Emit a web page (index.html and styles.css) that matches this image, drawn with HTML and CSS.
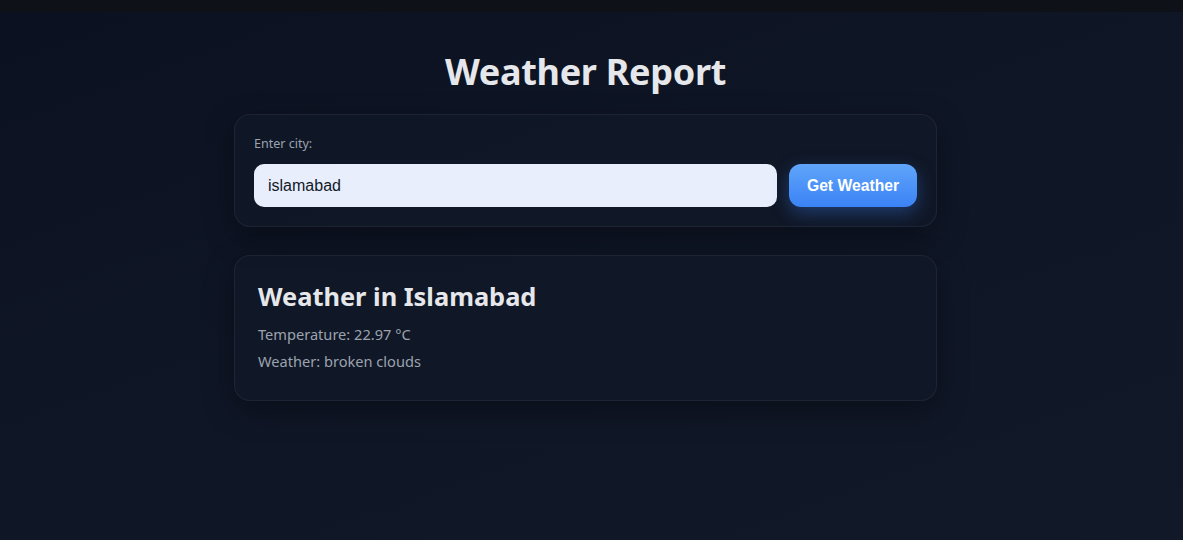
FILE: index.html
```html
<!DOCTYPE html>
<html lang="en">
<head>
<meta charset="utf-8">
<title>Weather Report</title>
<link rel="stylesheet" href="styles.css">
</head>
<body>
<div class="topbar"></div>
<main class="page">
  <div class="container">
    <h1 class="title">Weather Report</h1>
    <section class="card search">
      <label class="label" for="city">Enter city:</label>
      <div class="row">
        <input id="city" class="input" type="text" value="islamabad">
        <button class="btn" type="button">Get Weather</button>
      </div>
    </section>
    <section class="card result">
      <h2 class="result-title">Weather in Islamabad</h2>
      <p class="line">Temperature: 22.97 °C</p>
      <p class="line">Weather: broken clouds</p>
    </section>
  </div>
</main>
</body>
</html>
```
FILE: styles.css
```css
* { box-sizing: border-box; }
html, body { margin: 0; padding: 0; height: 100%; }
body {
  background: linear-gradient(160deg, #0b1120 0%, #0f1626 50%, #111827 100%);
  font-family: "Noto Sans", "Open Sans", sans-serif;
  color: #e5e7eb;
  overflow: hidden;
}
.topbar {
  height: 12px;
  background: #0e1118;
}
.page {
  padding-right: 12px;
}
.container {
  width: 703px;
  margin: 0 auto;
  display: flex;
  flex-direction: column;
}
.title {
  margin: 36px 0 18px;
  text-align: center;
  font-size: 36px;
  line-height: 48px;
  font-weight: 700;
  color: #e5e7eb;
  letter-spacing: -0.3px;
}
.card {
  background: rgba(17, 24, 39, 0.85);
  border: 1px solid rgba(255, 255, 255, 0.06);
  border-radius: 16px;
  box-shadow: 0 10px 30px rgba(0, 0, 0, 0.35);
}
.search {
  padding: 20px 19px 19px;
  display: flex;
  flex-direction: column;
}
.label {
  font-size: 12.5px;
  line-height: 18px;
  color: #9ca3af;
  margin-bottom: 11px;
}
.row {
  display: flex;
  gap: 12px;
}
.input {
  flex: 1;
  height: 43px;
  border: none;
  border-radius: 10px;
  background: #e8eefc;
  padding: 0 14px;
  font-family: "Liberation Sans", Arial, sans-serif;
  font-size: 16px;
  color: #111827;
  outline: none;
}
.btn {
  width: 128px;
  height: 43px;
  border: none;
  border-radius: 12px;
  background: linear-gradient(180deg, #60a5fa 0%, #3b82f6 100%);
  color: #ffffff;
  font-family: "Liberation Sans", Arial, sans-serif;
  font-weight: 700;
  font-size: 15.7px;
  box-shadow: 0 6px 18px rgba(59, 130, 246, 0.35);
}
.result {
  margin-top: 28px;
  padding: 23px 23px 25px;
}
.result-title {
  margin: 0 0 8px;
  font-size: 25.4px;
  line-height: 34px;
  font-weight: 700;
  color: #e5e7eb;
}
.line {
  margin: 0;
  font-size: 14.6px;
  line-height: 27px;
  color: #9ca3af;
}
```
